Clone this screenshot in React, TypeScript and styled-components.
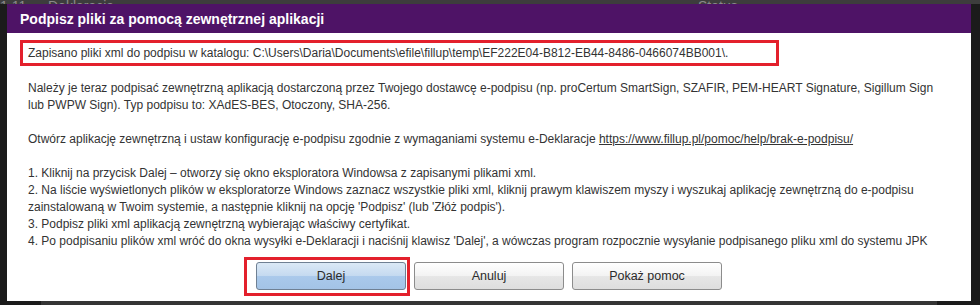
import React from "react";
import styled, { createGlobalStyle } from "styled-components";

const Global = createGlobalStyle`
  html, body { margin: 0; padding: 0; background: #1b1b1b; }
  body { width: 980px; height: 305px; overflow: hidden; font-family: "Liberation Sans", Arial, sans-serif; }
`;

const Screen = styled.div`
  position: relative;
  width: 980px;
  height: 305px;
  background: #1b1b1b;
  overflow: hidden;
`;

const BackHeader = styled.div`
  display: flex;
  height: 4px;
  background: #3d3d3d;
  overflow: hidden;
`;

const BackCell = styled.div<{ $w: number }>`
  width: ${(p) => p.$w}px;
  font-size: 14px;
  line-height: 4px;
  color: #8a8a8a;
  padding-top: 4px;
`;

const BackFooter = styled.div`
  position: absolute;
  left: 41px;
  top: 301px;
  width: 896px;
  height: 4px;
  background: #353535;
`;

const Dialog = styled.div`
  position: absolute;
  left: 7px;
  top: 4px;
  width: 964px;
  height: 297px;
  background: #ffffff;
  display: flex;
  flex-direction: column;
`;

const TitleBar = styled.div`
  height: 29px;
  background: #4e1366;
  display: flex;
  align-items: center;
  padding-left: 13px;
  color: #ffffff;
  font-weight: bold;
  font-size: 14px;
`;

const Body = styled.div`
  padding: 7px 13px 0 13px;
  color: #333333;
  font-size: 12px;
  line-height: 17px;
`;

const Highlight = styled.div`
  box-sizing: border-box;
  width: 759px;
  height: 26px;
  border: 3px solid #e3202c;
  padding: 0 5px;
  display: flex;
  align-items: center;
`;

const Text = styled.div<{ $top?: number }>`
  padding-left: 8px;
  margin-top: ${(p) => p.$top ?? 0}px;
  white-space: pre-line;
`;

const Link = styled.a`
  color: #333333;
  text-decoration: underline;
`;

const Buttons = styled.div`
  display: flex;
  justify-content: center;
  gap: 8px;
  margin-top: 12px;
`;

const Frame = styled.div`
  box-sizing: border-box;
  display: flex;
  padding: 2px 1px 3px 9px;
  border: 3px solid #e3202c;
  margin: -5px -4px -6px -12px;
`;

const Button = styled.button<{ $primary?: boolean }>`
  box-sizing: border-box;
  width: 150px;
  height: 28px;
  border-radius: 3px;
  border: 1px solid ${(p) => (p.$primary ? "#6f8093" : "#8c8c8c")};
  background: ${(p) =>
    p.$primary
      ? "linear-gradient(#dbe9f6 0%, #c5daf0 48%, #aac9eb 52%, #a3c3e6 100%)"
      : "linear-gradient(#ffffff 0%, #f3f3f3 48%, #e6e6e6 52%, #dedede 100%)"};
  font-family: "Liberation Sans", Arial, sans-serif;
  font-size: 12.5px;
  color: #2b2b2b;
  padding: 0;
  cursor: pointer;
`;

export default function App() {
  return (
    <Screen>
      <Global />
      <BackHeader>
        <BackCell $w={48}>1 11</BackCell>
        <BackCell $w={650}>Deklaracja</BackCell>
        <BackCell $w={280}>Status</BackCell>
      </BackHeader>
      <BackFooter />
      <Dialog>
        <TitleBar>Podpisz pliki za pomocą zewnętrznej aplikacji</TitleBar>
        <Body>
          <Highlight>
            Zapisano pliki xml do podpisu w katalogu: C:\Users\Daria\Documents\efile\fillup\temp\EF222E04-B812-EB44-8486-0466074BB001\.
          </Highlight>
          <Text $top={14}>
            Należy je teraz podpisać zewnętrzną aplikacją dostarczoną przez Twojego dostawcę e-podpisu (np. proCertum SmartSign, SZAFIR, PEM-HEART Signature, Sigillum Sign{"\n"}lub PWPW Sign). Typ podpisu to: XAdES-BES, Otoczony, SHA-256.
          </Text>
          <Text $top={17}>
            Otwórz aplikację zewnętrzną i ustaw konfigurację e-podpisu zgodnie z wymaganiami systemu e-Deklaracje{" "}
            <Link href="#">https://www.fillup.pl/pomoc/help/brak-e-podpisu/</Link>
          </Text>
          <Text $top={17}>
            1. Kliknij na przycisk Dalej – otworzy się okno eksploratora Windowsa z zapisanymi plikami xml.{"\n"}
            2. Na liście wyświetlonych plików w eksploratorze Windows zaznacz wszystkie pliki xml, kliknij prawym klawiszem myszy i wyszukaj aplikację zewnętrzną do e-podpisu{"\n"}
            zainstalowaną w Twoim systemie, a następnie kliknij na opcję 'Podpisz' (lub 'Złóż podpis').{"\n"}
            3. Podpisz pliki xml aplikacją zewnętrzną wybierając właściwy certyfikat.{"\n"}
            4. Po podpisaniu plików xml wróć do okna wysyłki e-Deklaracji i naciśnij klawisz 'Dalej', a wówczas program rozpocznie wysyłanie podpisanego pliku xml do systemu JPK
          </Text>
          <Buttons>
            <Frame>
              <Button $primary>Dalej</Button>
            </Frame>
            <Button>Anuluj</Button>
            <Button>Pokaż pomoc</Button>
          </Buttons>
        </Body>
      </Dialog>
    </Screen>
  );
}
